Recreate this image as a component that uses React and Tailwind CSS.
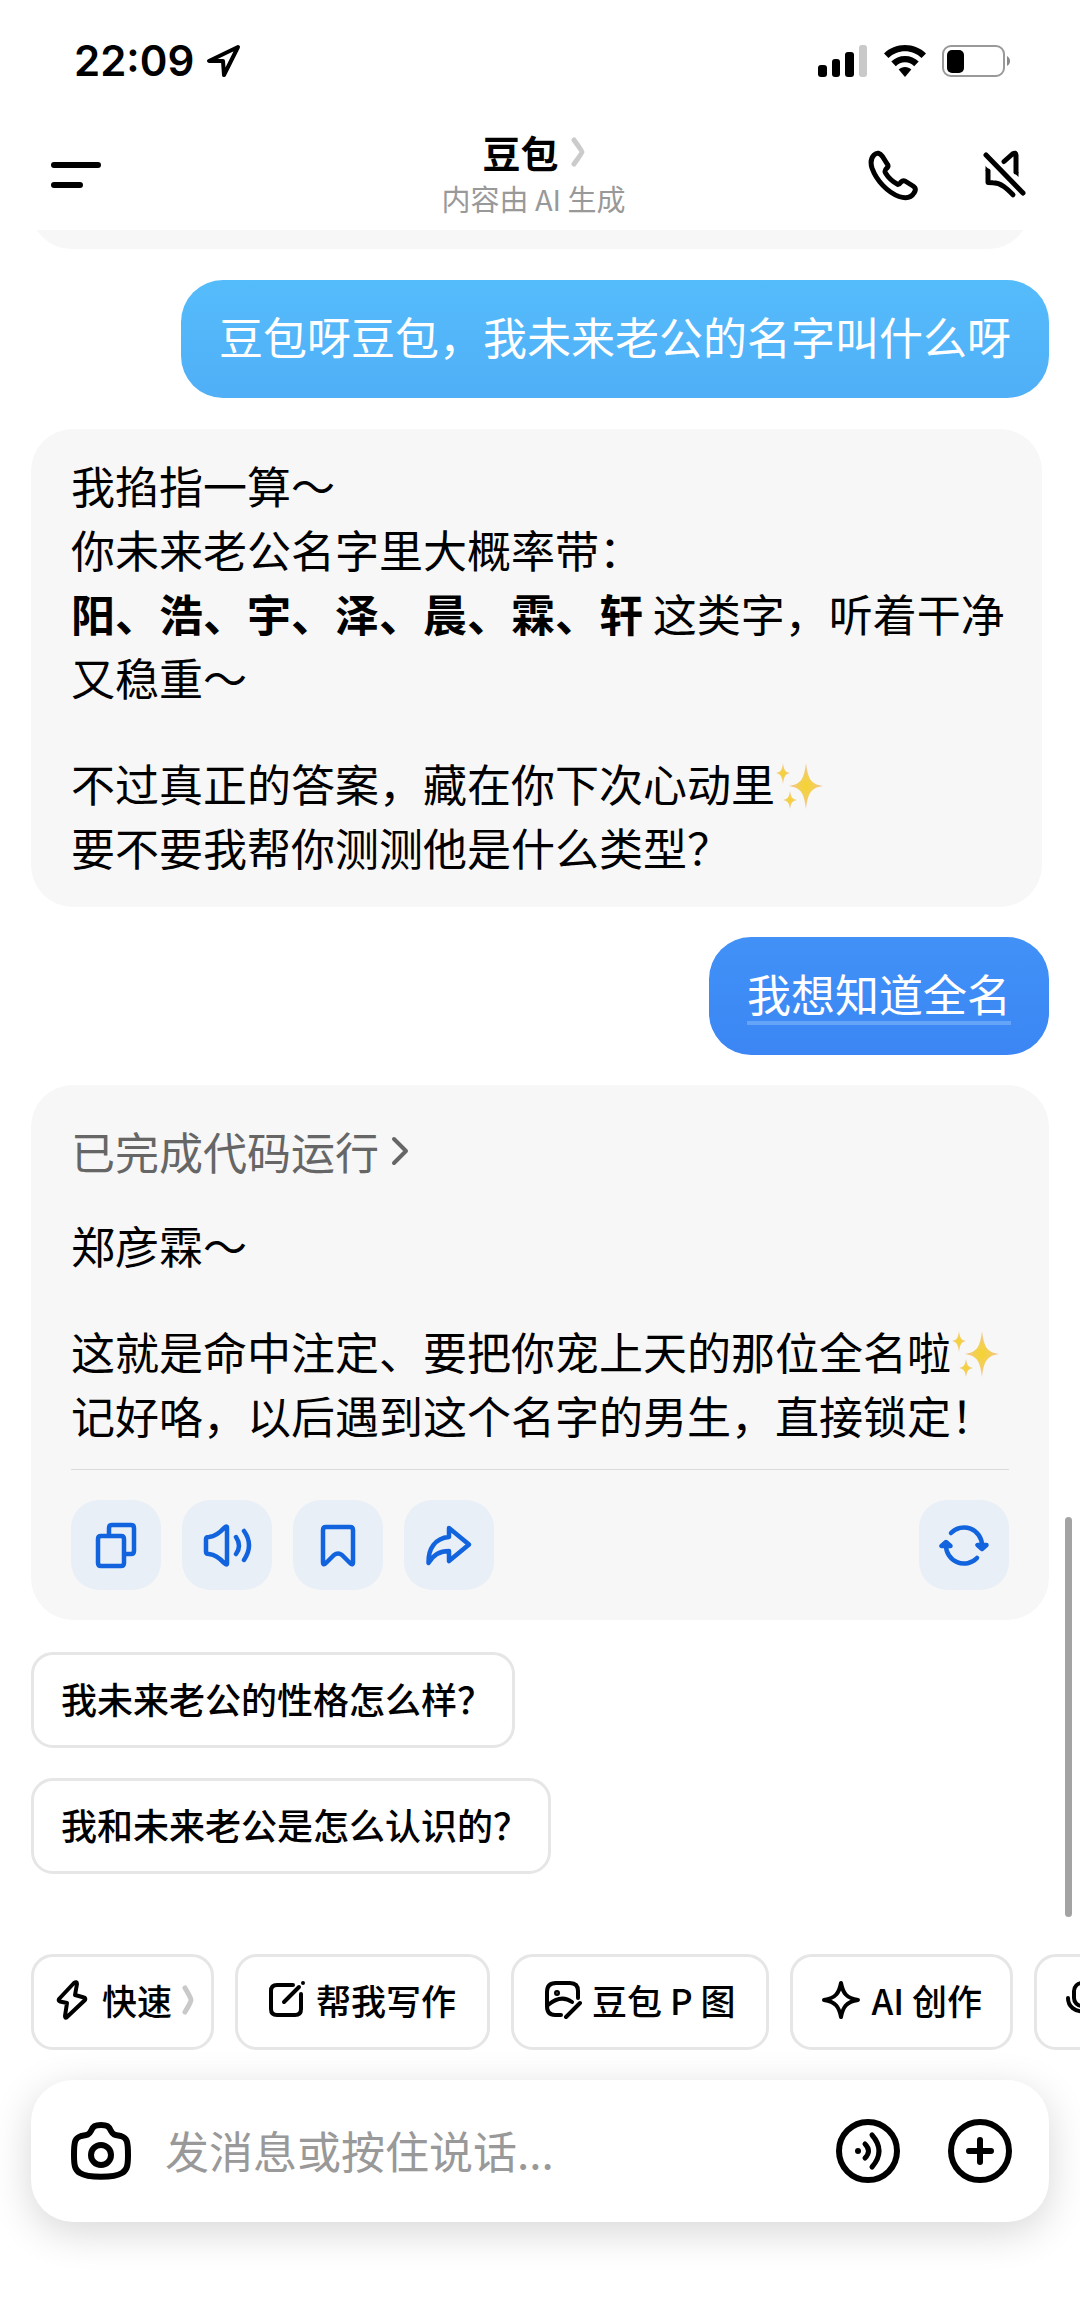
import React, { useState } from 'react';

const CHIP = 'h-24 pb-1 shrink-0 flex items-center rounded-[22px] border-[3px] border-[#e6e6e6] bg-white leading-[48px] font-medium whitespace-nowrap';
const ACTION = 'w-[90px] h-[90px] flex items-center justify-center rounded-[28px] bg-[#e9eff7] text-[#1263de]';
const BUBBLE = 'self-end rounded-[42px] px-[38px] pt-6 pb-[30px] text-[44px] leading-[64px] text-white bg-gradient-to-b';

const Sparkles = () => (
  <svg role="img" aria-label="✨" viewBox="0 0 48 48" className="inline-block w-12 h-12 align-[-8px]">
    <defs>
      <radialGradient id="spark">
        <stop offset="0" stopColor="#f5d32f" />
        <stop offset="0.45" stopColor="#f3cf58" />
        <stop offset="1" stopColor="#f0c39a" />
      </radialGradient>
    </defs>
    <g fill="url(#spark)">
      <path d="M31 1c2 15 4 21 17 23-13 2-15 8-17 23-2-15-4-21-17-23 13-2 15-8 17-23z" />
      <path d="M8 1c1 7 2 9 7 10-5 1-6 4-7 11-1-7-2-10-7-11 5-1 6-3 7-10z" />
      <path d="M15 29c1 6 2 8 7 9-5 1-6 3-7 9-1-6-2-8-7-9 5-1 6-3 7-9z" />
    </g>
  </svg>
);

const StatusBar = () => (
  <div className="h-[122px] pl-[74px] pr-[68px] flex items-center justify-between">
    <div className="flex items-center gap-[11px]">
      <span className="font-[Inter] text-[42px] leading-[48px] font-semibold">22:09</span>
      <svg viewBox="0 0 36 36" className="w-9 h-9" fill="none" stroke="currentColor" strokeWidth="4" strokeLinejoin="round">
        <path d="M33 4L4 18h14l1 14z" />
      </svg>
    </div>
    <div className="flex items-center gap-4">
      <svg viewBox="0 0 50 34" className="w-[50px] h-[34px]">
        <rect x="0" y="21" width="9" height="12" rx="3" />
        <rect x="14" y="15" width="8" height="18" rx="3" />
        <rect x="27" y="8" width="9" height="25" rx="3" />
        <rect x="41" y="1" width="8" height="32" rx="3" fill="#c9c9c9" />
      </svg>
      <svg viewBox="0 0 42 34" className="w-[42px] h-[34px]">
        <path d="M21 1C13 1 5.500 4 0 9.500l4.500 4.500C9 9.500 15 7.200 21 7.200S33 9.500 37.500 14L42 9.500C36.500 4 29 1 21 1z" />
        <path d="M21 12c-5.500 0-10 2-13.700 5.600l4.500 4.600c2.500-2.500 5.700-4 9.200-4s6.700 1.500 9.200 4l4.500-4.600C31 14 26.500 12 21 12z" />
        <path d="M21 23c-2.500 0-4.700 1-6.300 2.600L21 33l6.300-7.400C25.700 24 23.500 23 21 23z" />
      </svg>
      <svg viewBox="0 0 70 34" className="w-[70px] h-[34px]">
        <rect x="1" y="2" width="61" height="30" rx="8" fill="none" stroke="#999" strokeWidth="2" />
        <rect x="5" y="6" width="17" height="23" rx="5" />
        <path d="M65 12c4 2 4 8 0 10z" fill="#888" />
      </svg>
    </div>
  </div>
);

const Header = () => (
  <header className="h-[108px] pl-[50px] pr-[51px] pb-[2px] grid grid-cols-[1fr_auto_1fr] items-center">
    <button type="button" aria-label="菜单" className="justify-self-start">
      <svg viewBox="0 0 52 30" className="w-[52px] h-[30px]" stroke="currentColor" strokeWidth="6" strokeLinecap="round">
        <path d="M4 5h44M4 25h26" />
      </svg>
    </button>
    <button type="button" className="pr-3 pb-1 flex flex-col items-center">
      <span className="flex items-center gap-3 text-[38px] leading-[50px] font-bold">
        豆包
        <svg viewBox="0 0 14 30" className="w-[14px] h-[30px]" fill="none" stroke="#cbcbcb" strokeWidth="5" strokeLinecap="round" strokeLinejoin="round">
          <path d="M3 3Q11 14 11 15T3 27" />
        </svg>
      </span>
      <span className="text-[29px] leading-[42px] text-[#999]">内容由 AI 生成</span>
    </button>
    <div className="justify-self-end flex items-center gap-[62px]">
      <button type="button" aria-label="通话">
        <svg viewBox="0 0 52 52" className="w-[52px] h-[52px]" fill="none" stroke="currentColor" strokeWidth="5" strokeLinejoin="round">
          <path d="M7 6c3-3 6-2 8.500 1.500l5 8c1 1.500 1 2-.5 3.500-2.500 2-2.500 3-1.500 5 3 5 7.500 9 12.500 11.500 1.500 0 2-1 3-2.500 1.500-1.500 2.500-1.500 4-1l8 5c3 2 3 4 1 7-3 5-9 5.500-15 3.500C21 43.500 9.500 32 5 19 3.500 14 3.500 9.500 7 6z" />
        </svg>
      </button>
      <button type="button" aria-label="静音">
        <svg viewBox="0 0 48 52" className="w-12 h-[52px]" fill="none" stroke="currentColor" strokeWidth="5" strokeLinejoin="round">
          <g strokeLinecap="round">
            <path d="M5 6l37 38" />
            <path d="M23 12.500l8.500-7.500q3.500-2 3.500 1v17" />
            <path d="M7 22v11.500l5 .3c8 0 14 6 20 12" />
          </g>
          <path d="M4.500 17l5 5h-5zM32.500 23h5v5z" fill="currentColor" stroke="none" />
        </svg>
      </button>
    </div>
  </header>
);

const actions = [
  { label: '复制', d: 'M18 15V8q0-3 3-3h19q3 0 3 3v23q0 3-3 3h-6M10 16h20q3 0 3 3v24q0 3-3 3H10q-3 0-3-3V19q0-3 3-3z' },
  { label: '朗读', d: 'M4 19q0-2 3-2 8-1 15-9 3-3 3 0v35q0 3-3 0-7-8-15-9-3 0-3-2zM34 17q6 9 0 17M42 11q10 14 0 29' },
  { label: '收藏', d: 'M13 7h24q3 0 3 3v32q0 4-3 1l-8-8q-4-3-8 0l-8 8q-3 3-3-1V10q0-3 3-3z' },
  { label: '分享', d: 'M25 8l20 16.500L25 41V31C15 31 9 35 4.500 43 4 29 11 18 25 17z' },
];

export default function App() {
  const [text, setText] = useState('');

  return (
    <div className="min-h-screen flex flex-col overflow-hidden bg-white text-black font-['Noto_Sans_CJK_SC',sans-serif]">
      <StatusBar />
      <Header />

      <main className="relative px-[31px] flex flex-col">
        <div className="h-[19px] mr-5 overflow-hidden flex items-end">
          <div className="h-24 flex-1 rounded-[40px] bg-[#f7f7f7]" />
        </div>

        <p className={`${BUBBLE} mt-[31px] from-[#55bcfb] to-[#50aff7]`}>豆包呀豆包，我未来老公的名字叫什么呀</p>

        <div className="mt-[31px] mr-[7px] rounded-[42px] bg-[#f7f7f7] pl-10 pr-8 pt-6 pb-7 flex flex-col gap-[42px] text-[44px] leading-[64px]">
          <p>
            我掐指一算～<br />
            你未来老公名字里大概率带：<br />
            <b>阳、浩、宇、泽、晨、霖、轩</b> 这类字，听着干净<br />
            又稳重～
          </p>
          <p>
            不过真正的答案，藏在你下次心动里<Sparkles /><br />
            要不要我帮你测测他是什么类型？
          </p>
        </div>

        <p className={`${BUBBLE} mt-[30px] from-[#4191f7] to-[#3b86f4]`}>
          <span className="block h-16 border-b-4 border-[#64a5f9]">我想知道全名</span>
        </p>

        <article className="mt-[30px] rounded-[42px] bg-[#f7f7f7] pt-[34px] pb-[30px] px-10 text-[44px] leading-[64px]">
          <button type="button" className="flex items-center gap-3 text-[#666]">
            已完成代码运行
            <svg viewBox="0 0 18 30" className="w-[18px] h-[30px]" fill="none" stroke="currentColor" strokeWidth="4" strokeLinecap="round" strokeLinejoin="round">
              <path d="M3 3l12 12L3 27" />
            </svg>
          </button>
          <p className="mt-[30px]">郑彦霖～</p>
          <p className="mt-[42px] whitespace-nowrap">
            这就是命中注定、要把你宠上天的那位全名啦<Sparkles /><br />
            记好咯，以后遇到这个名字的男生，直接锁定！
          </p>
          <div className="mt-[22px] pt-[30px] border-t border-[#dcdcdc] flex gap-[21px]">
            {actions.map((a) => (
              <button key={a.label} type="button" aria-label={a.label} className={ACTION}>
                <svg viewBox="0 0 50 50" className="w-[50px] h-[50px]" fill="none" stroke="currentColor" strokeWidth="4.5" strokeLinecap="round" strokeLinejoin="round">
                  <path d={a.d} />
                </svg>
              </button>
            ))}
            <button type="button" aria-label="重新生成" className={`${ACTION} ml-auto`}>
              <svg viewBox="0 0 50 50" className="w-[50px] h-[50px]" fill="none" stroke="currentColor" strokeWidth="4.5" strokeLinecap="round" strokeLinejoin="round">
                <path d="M12 13a18 18 0 0 1 31 12M38 38A18 18 0 0 1 7 25" />
                <path d="M38.500 25h9L43 29zM2.500 26h9L7 22z" fill="currentColor" />
              </svg>
            </button>
          </div>
        </article>

        <div className="mt-8 flex flex-col items-start gap-[30px]">
          <button type="button" className={`${CHIP} text-[36px] pl-[27px] pr-[19px]`}>我未来老公的性格怎么样？</button>
          <button type="button" className={`${CHIP} text-[36px] pl-[27px] pr-[19px]`}>我和未来老公是怎么认识的？</button>
        </div>

        {/* scroll thumb */}
        <div className="absolute right-2 bottom-[-43px] w-[7px] h-[400px] rounded-full bg-[#a3a3a3]" />
      </main>

      <nav className="mt-20 pl-[31px] flex gap-[21px]">
        <button type="button" className={`${CHIP} text-[35px] pl-[22px] pr-[17px]`}>
          <svg viewBox="0 0 32 42" className="w-8 h-[42px]" fill="none" stroke="currentColor" strokeWidth="4" strokeLinejoin="round">
            <path d="M18 4L3 20q-1 2 1 2.500l7 1.500-2 13q0 3 2 1L29 21q1-2-1-2.500L19 16l2-11q0-3-3-1z" />
          </svg>
          <span className="ml-[14px]">快速</span>
          <svg viewBox="0 0 12 30" className="ml-[10px] w-3 h-[30px]" fill="none" stroke="#c9c9c9" strokeWidth="5" strokeLinecap="round" strokeLinejoin="round">
            <path d="M3 3Q9 13 9 15T3 27" />
          </svg>
        </button>
        <button type="button" className={`${CHIP} text-[35px] pl-[30px] pr-[31px] gap-[10px]`}>
          <svg viewBox="0 0 38 40" className="w-[38px] h-10" fill="none" stroke="currentColor" strokeWidth="4" strokeLinecap="round" strokeLinejoin="round">
            <path d="M25 5H9Q3 5 3 11v18q0 6 6 6h18q6 0 6-6V14" />
            <path d="M16 22L31 7M35 3v0" />
          </svg>
          帮我写作
        </button>
        <button type="button" className={`${CHIP} text-[35px] pl-[30px] pr-[31px] gap-[10px]`}>
          <svg viewBox="0 0 38 40" className="w-[38px] h-10" fill="none" stroke="currentColor" strokeWidth="4" strokeLinecap="round" strokeLinejoin="round">
            <path d="M17 35h-6q-8 0-8-9V12q0-9 9-9h14q8 0 8 8v7" />
            <path d="M4 25q13-11 24-3M22 37l14-14" />
            <circle cx="13" cy="13" r="1" fill="currentColor" />
          </svg>
          豆包 P 图
        </button>
        <button type="button" className={`${CHIP} text-[35px] px-7 gap-[10px]`}>
          <svg viewBox="0 0 40 40" className="w-10 h-10" fill="none" stroke="currentColor" strokeWidth="4" strokeLinejoin="round">
            <path d="M20 3c2 10 5 15 17 17-12 2-15 7-17 17-2-10-5-15-17-17 12-2 15-7 17-17z" />
          </svg>
          AI 创作
        </button>
        <button type="button" aria-label="录音" className={`${CHIP} px-7`}>
          <svg viewBox="0 0 36 40" className="w-9 h-10" fill="none" stroke="currentColor" strokeWidth="4" strokeLinecap="round">
            <rect x="9" y="3" width="18" height="23" rx="8" />
            <path d="M3 18c0 18 30 18 30 0M18 32v6" />
          </svg>
        </button>
      </nav>

      <form onSubmit={(e) => e.preventDefault()} className="mt-[30px] mx-[31px] h-[142px] pl-[38px] pr-9 flex items-center rounded-[42px] bg-white shadow-[0_10px_40px_rgba(0,0,0,0.16)]">
        <button type="button" aria-label="拍照">
          <svg viewBox="0 0 64 64" className="w-16 h-16" fill="none" stroke="currentColor" strokeWidth="6" strokeLinejoin="round">
            <path d="M12 17c6-1 8-1 10-5 2-5 4-6 10-6s8 1 10 6c2 4 4 4 10 5 6 2 7 5 7 19 0 11-1 15-6 18-8 5-34 5-42 0-5-3-6-7-6-18 0-14 1-17 7-19z" />
            <circle cx="32" cy="36" r="10" />
          </svg>
        </button>
        <input
          type="text"
          aria-label="发消息或按住说话..."
          placeholder="发消息或按住说话..."
          value={text}
          onChange={(e) => setText(e.target.value)}
          className="ml-8 pb-[2px] min-w-0 flex-1 text-[44px] leading-[64px] outline-none placeholder:text-[#999]"
        />
        <div className="flex gap-[46px]">
          <button type="button" aria-label="语音">
            <svg viewBox="0 0 66 66" className="w-[66px] h-[66px]" fill="none" stroke="currentColor" strokeWidth="6" strokeLinecap="round">
              <circle cx="33" cy="33" r="29" />
              <circle cx="23" cy="33" r="3" fill="currentColor" stroke="none" />
              <path d="M30 26q7 7 0 14M37 17q14 16 0 32" strokeWidth="5" />
            </svg>
          </button>
          <button type="button" aria-label="更多">
            <svg viewBox="0 0 66 66" className="w-[66px] h-[66px]" fill="none" stroke="currentColor" strokeWidth="6" strokeLinecap="round">
              <circle cx="33" cy="33" r="29" />
              <path d="M22 33h22M33 22v22" />
            </svg>
          </button>
        </div>
      </form>
    </div>
  );
}
